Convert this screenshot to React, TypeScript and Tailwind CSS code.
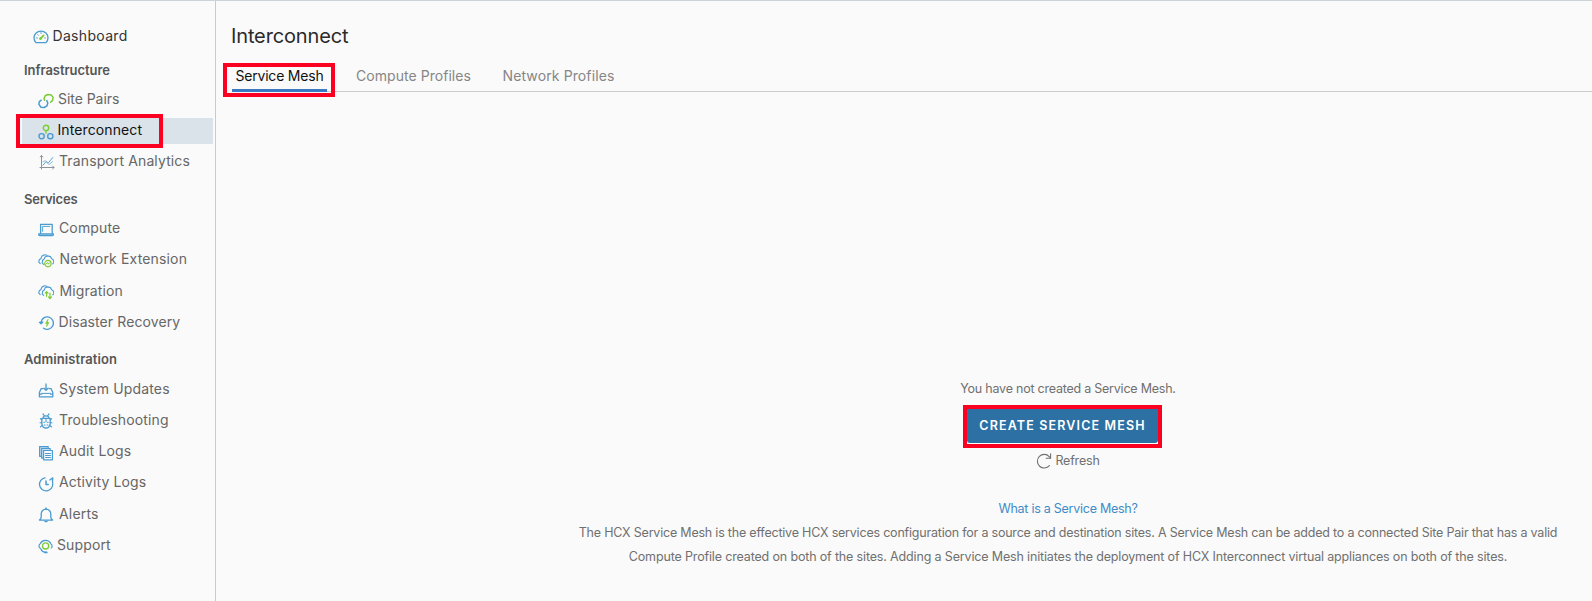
import type { ReactNode } from 'react';

const BLUE = '#4a9bd0';
const GREEN = '#7ccb35';

function Svg({ children, className = '' }: { children: ReactNode; className?: string }) {
  return (
    <svg viewBox="0 0 16 16" fill="none" stroke={BLUE} strokeWidth="1.1" strokeLinecap="round" strokeLinejoin="round" className={`size-4 shrink-0 ${className}`}>
      {children}
    </svg>
  );
}

const DashboardIcon = () => (
  <Svg className="mt-[3px] ml-[0.5px]">
    <path d="M3 13.6A7 6.8 0 1 1 13 13.6Z" strokeWidth="1.3" />
    <path d="M8 3.6v1M3.4 9h1M11.6 9h1M4.8 5.6l.7.7" strokeWidth=".9" />
    <path d="M7.4 9.8 10.6 6.4" stroke={GREEN} strokeWidth="1.8" />
    <circle cx="7.5" cy="9.6" r=".8" stroke={GREEN} fill={GREEN} />
  </Svg>
);

const PairsIcon = () => (
  <Svg className="mt-[3px]">
    <path d="M6.6 7.2 6 5.4 7.2 2.8 10 1.5 13.2 2 15.1 4.4 14.6 7.4 12.6 9.2" stroke={GREEN} strokeWidth="1.5" />
    <path d="M3.2 7.2 1.3 8.6.9 11.4 3 14.2 6.2 14.5 9 12.8 9.8 10 8.8 7.6" strokeWidth="1.5" />
  </Svg>
);

const InterconnectIcon = () => (
  <Svg className="mt-px">
    <circle cx="8" cy="3.9" r="2.7" stroke={GREEN} strokeWidth="1.4" />
    <path d="M8 6.8v2.4" stroke={GREEN} strokeWidth="1.3" />
    <circle cx="3.6" cy="12.2" r="2.6" strokeWidth="1.4" />
    <circle cx="12.3" cy="12.2" r="2.6" strokeWidth="1.4" />
  </Svg>
);

const AnalyticsIcon = () => (
  <Svg className="mt-px ml-[0.5px] mr-[-0.5px]">
    <path d="M2.5 1.5v12h12.3M1.3 3l1.2-1.5L3.7 3M13.6 12l1.5 1.5L13.6 15M1 13.5h1.5V15" stroke="#8c9298" strokeWidth="1" />
    <path d="M4 11.2 7 7.6l2.4 1.2 4.4-5.3" strokeWidth=".9" />
    <path d="M4 7.8l2.4-1.2 3.4 4 4-3.1" stroke="#8db4ce" strokeWidth=".9" />
  </Svg>
);

const ComputeIcon = () => (
  <Svg className="mt-[3px]">
    <path d="M2.6 11V2.4h11.6V11M.7 11.9h14.8v.6q0 1-1 1H1.7q-1 0-1-1z" strokeWidth="1.3" />
    <path d="M4.6 9.4V4.4h7.2" strokeWidth=".9" />
  </Svg>
);

const CloudOutline = () => (
  <>
    <path d="M2.2 10.6.8 9.2l.4-2.4 1.6-1L4 3 6.4 1.8l2.6.4" strokeWidth="1.1" />
    <path d="M5.6 11.4 4.2 9.8l.4-2.6L6.2 6l1-2.2L9.6 2.9l2.8.7 1.2 2 2 1.6.2 2.4-1 1.2" strokeWidth="1.1" />
  </>
);

const ExtensionIcon = () => (
  <Svg className="mt-[2px]">
    <CloudOutline />
    <circle cx="9.9" cy="10.6" r="3.2" stroke={GREEN} strokeWidth="1.2" />
    <path d="M8 11.2 9.6 9.4l.8 1.8 1.4-1.6" stroke={GREEN} strokeWidth="1" />
  </Svg>
);

const MigrationIcon = () => (
  <Svg className="mt-[2px]">
    <CloudOutline />
    <path d="M8.6 12.3V8M7.2 9.2l1.4-1.5L10 9.2M12 9v5.4M10.6 13l1.4 1.5 1.4-1.5" stroke={GREEN} strokeWidth="1.2" />
  </Svg>
);

const RecoveryIcon = () => (
  <Svg className="mt-[3px]">
    <path d="M3 7.4a6.2 6.2 0 1 1 2.6 5.8" strokeWidth="1.4" />
    <path d="M1.2 7.2l2 1.8L5 7z" fill={BLUE} />
    <path d="M9.9 4.6 7.6 8.4h1.6l-.6 3.2 2.3-4H9.5z" fill={GREEN} stroke={GREEN} strokeWidth=".7" />
  </Svg>
);

const UpdatesIcon = () => (
  <Svg className="mt-[2px]">
    <path d="M5 5.6H3.2L1.4 9.6v4.2h13.4V9.6L13 5.6h-1.8M1.4 11.2H3.6M12.6 11.2h2.2" strokeWidth="1.3" />
    <path d="M8 1v6M5.9 5.2 8 7.3l2.1-2.1" strokeWidth="1.3" />
    <path d="M3.6 10.4h9" strokeWidth="1" />
  </Svg>
);

const BugIcon = () => (
  <Svg className="mt-[1px]">
    <path d="M5.2 4.6Q5.4 2.8 8 2.8t2.8 1.8M5 .9l1.4 2M11 .9 9.6 2.9" strokeWidth="1.2" />
    <path d="M3.8 5.4h8.4v5.4Q11.6 15 8 15t-4.2-4.2z" strokeWidth="1.3" />
    <path d="M3.8 7.2 2.4 5.6M12.2 7.2l1.4-1.6M3.8 9.8H2M12.2 9.8H14M4.3 12.4l-1.8 1.4M11.7 12.4l1.8 1.4M8 5.4v3.2M5.8 9.2h.9M9.3 9.2h.9M6.2 12h.9M9 12h.9" strokeWidth="1.1" />
  </Svg>
);

const AuditIcon = () => (
  <Svg className="mt-[3px]">
    <path d="M3.4 11.3H1.6V1.6h8.6v1.4" strokeWidth="1.2" fill="#c4dff0" />
    <path d="M5.2 13.1H3.6V3.5h8.6v1.4" strokeWidth="1.1" fill="#c4dff0" />
    <path d="M5.6 5.5h8.8v9.3H5.6z" strokeWidth="1.2" fill="#fafafa" />
    <path d="M7.5 8.5h5M7.5 10.5h5M7.5 12.5h5" strokeWidth="1" />
  </Svg>
);

const ActivityIcon = () => (
  <Svg className="mt-[3px]">
    <path d="M7 1.8A6.6 6.6 0 1 0 14.7 7.6" strokeWidth="1.3" />
    <path d="M14.8 1.9 11.8 4M14.8 1.9l-.3 3.4M14.6 5.4v1.4" strokeWidth="1.3" />
    <path d="M8 4.9v3.6h2.2" strokeWidth="1.5" />
  </Svg>
);

const BellIcon = () => (
  <Svg className="mt-[3px]">
    <path d="M1.4 13.1q1.6-1.2 1.8-3V6.8Q3.6 2.4 8 2.1q4.4.3 4.8 4.7v3.3q.2 1.8 1.8 3z" strokeWidth="1.3" />
    <path d="M8 1v1M6.9 14.2q1.1.9 2.2 0" strokeWidth="1.3" />
  </Svg>
);

const SupportIcon = () => (
  <Svg className="mt-[2px]">
    <path d="M2.4 5.4A6 6 0 0 1 12.6 5.2M2.2 5.8Q.9 6.4 1 8.2t1.2 2M12.8 5.8q1.4.6 1.3 2.4t-.9 1.8M2.8 10.8q1 3 4.2 3.4" strokeWidth="1.2" />
    <path d="M7 14.4h1.8" strokeWidth="1.7" />
    <circle cx="7.6" cy="7.9" r="3.1" stroke={GREEN} strokeWidth="1.3" />
  </Svg>
);

const RefreshIcon = () => (
  <svg viewBox="0 0 16 16" fill="none" stroke="#707070" strokeWidth="1.1" strokeLinecap="round" strokeLinejoin="round" className="mr-[3px] size-4 shrink-0">
    <path d="M13.4 12.6A6.8 6.8 0 1 1 13.2 3.6L14.5 5" />
    <path d="M14.6.8V5.2H10.2" />
  </svg>
);

type Item = { label: string; icon: ReactNode; text: string };

const groups: { title: string; heading: string; items: Item[] }[] = [
  {
    title: 'Infrastructure',
    heading: 'h-[33px] pt-[6px] tracking-[-0.05px]',
    items: [
      { label: 'Site Pairs', icon: <PairsIcon />, text: 'ml-[4px] pb-[2px] tracking-[-0.04px]' },
      { label: 'Interconnect', icon: <InterconnectIcon />, text: 'ml-[3.5px] pb-[4px] tracking-[0.11px]' },
      { label: 'Transport Analytics', icon: <AnalyticsIcon />, text: 'ml-[5px] pb-[2px] tracking-[0.12px]' },
    ],
  },
  {
    title: 'Services',
    heading: 'h-[36px] pt-[9px] tracking-[-0.2px]',
    items: [
      { label: 'Compute', icon: <ComputeIcon />, text: 'ml-[5px] pb-[2px] tracking-[0.14px]' },
      { label: 'Network Extension', icon: <ExtensionIcon />, text: 'ml-[5.5px] pb-[2px] tracking-[0.16px]' },
      { label: 'Migration', icon: <MigrationIcon />, text: 'ml-[5.5px] tracking-[0.11px]' },
      { label: 'Disaster Recovery', icon: <RecoveryIcon />, text: 'ml-[4.5px] tracking-[0.09px]' },
    ],
  },
  {
    title: 'Administration',
    heading: 'h-[37px] pt-[9px] tracking-[0.08px]',
    items: [
      { label: 'System Updates', icon: <UpdatesIcon />, text: 'ml-[5px] pb-[2px] tracking-[0.16px]' },
      { label: 'Troubleshooting', icon: <BugIcon />, text: 'ml-[5px] pb-[2px] tracking-[0.16px]' },
      { label: 'Audit Logs', icon: <AuditIcon />, text: 'ml-[5px] pb-[2px] tracking-[0.16px]' },
      { label: 'Activity Logs', icon: <ActivityIcon />, text: 'ml-[5px] pb-[2px] tracking-[0.1px]' },
      { label: 'Alerts', icon: <BellIcon />, text: 'ml-[5px] tracking-[0.17px]' },
      { label: 'Support', icon: <SupportIcon />, text: 'ml-[3px] tracking-[0.12px]' },
    ],
  },
];

function NavItem({ item }: { item: Item }) {
  const active = item.label === 'Interconnect';
  return (
    <li className="relative flex h-[31px] items-center">
      <a
        href="#"
        className={`ml-[22px] flex h-[26px] w-[191px] items-center pl-4 text-[14px] whitespace-nowrap ${active ? 'mt-px bg-[#dae3ea] text-[#111]' : 'text-[#666]'}`}
      >
        {item.icon}
        <span className={item.text}>{item.label}</span>
      </a>
      {active && <span className="absolute top-[-1px] left-4 h-[34px] w-[147px] border-4 border-[#fb0020]" />}
    </li>
  );
}

function Sidebar() {
  return (
    <nav className="w-[216px] shrink-0 border-r border-[#c9cacc] pt-[19px]">
      <a href="#" className="flex h-[31px] items-center pl-8 text-[14px] text-[#333]">
        <DashboardIcon />
        <span className="ml-[4px] tracking-[0.32px]">Dashboard</span>
      </a>
      {groups.map((g) => (
        <section key={g.title}>
          <h2 className={`flex items-center pl-6 text-[13px] font-semibold text-[#565656] ${g.heading}`}>{g.title}</h2>
          <ul>
            {g.items.map((i) => (
              <NavItem key={i.label} item={i} />
            ))}
          </ul>
        </section>
      ))}
    </nav>
  );
}

function Tabs() {
  return (
    <div className="relative ml-[16px] flex h-[32px] border-b border-[#ccc] text-[14px] text-[#868686]">
      <button className="mb-[-1px] flex w-[95px] items-center justify-center border-b-[3px] border-[#3d79c0] pt-px whitespace-nowrap tracking-[-0.2px] text-[#111]">
        Service Mesh
      </button>
      <button className="ml-[29px] flex items-center whitespace-nowrap tracking-[0.05px]">Compute Profiles</button>
      <button className="ml-[31.5px] flex items-center whitespace-nowrap tracking-[0.12px]">Network Profiles</button>
      <span className="absolute top-[3px] left-[-9px] h-[34px] w-[112px] border-4 border-[#fb0020]" />
    </div>
  );
}

function EmptyState() {
  return (
    <div className="mt-[285px] ml-[328px] flex flex-col items-center text-[12.5px] leading-[24px] text-[#707070]">
      <p className="tracking-[-0.23px]">You have not created a Service Mesh.</p>
      <div className="mt-[4px] mr-[11px] h-[43px] w-[199px] border-4 border-[#fb0020] bg-white">
        <button className="flex h-[34px] w-full items-center justify-center rounded-b-[3px] bg-[#2c70a4] text-[12.5px] font-semibold tracking-[1.15px] text-white">
          CREATE SERVICE MESH
        </button>
      </div>
      <button className="mt-px flex h-6 items-center tracking-[-0.19px]">
        <RefreshIcon />
        Refresh
      </button>
      <a href="#" className="mt-[24px] tracking-[-0.26px] text-[#3f8bc8]">What is a Service Mesh?</a>
      <p className="whitespace-nowrap tracking-[-0.207px]">
        The HCX Service Mesh is the effective HCX services configuration for a source and destination sites. A Service Mesh can be added to a connected Site Pair that has a valid
      </p>
      <p className="whitespace-nowrap tracking-[-0.154px]">
        Compute Profile created on both of the sites. Adding a Service Mesh initiates the deployment of HCX Interconnect virtual appliances on both of the sites.
      </p>
    </div>
  );
}

export default function App() {
  return (
    <div className="flex h-[601px] w-[1592px] overflow-hidden border-t border-[#ccd3d8] bg-[#fafafa] font-['Inter',sans-serif]">
      <Sidebar />
      <main className="min-w-0 flex-1">
        <h1 className="mt-[20px] ml-[15px] h-[39px] text-[20px] leading-[30px] tracking-[-0.14px] text-[#2a2a2a]">Interconnect</h1>
        <Tabs />
        <EmptyState />
      </main>
    </div>
  );
}
